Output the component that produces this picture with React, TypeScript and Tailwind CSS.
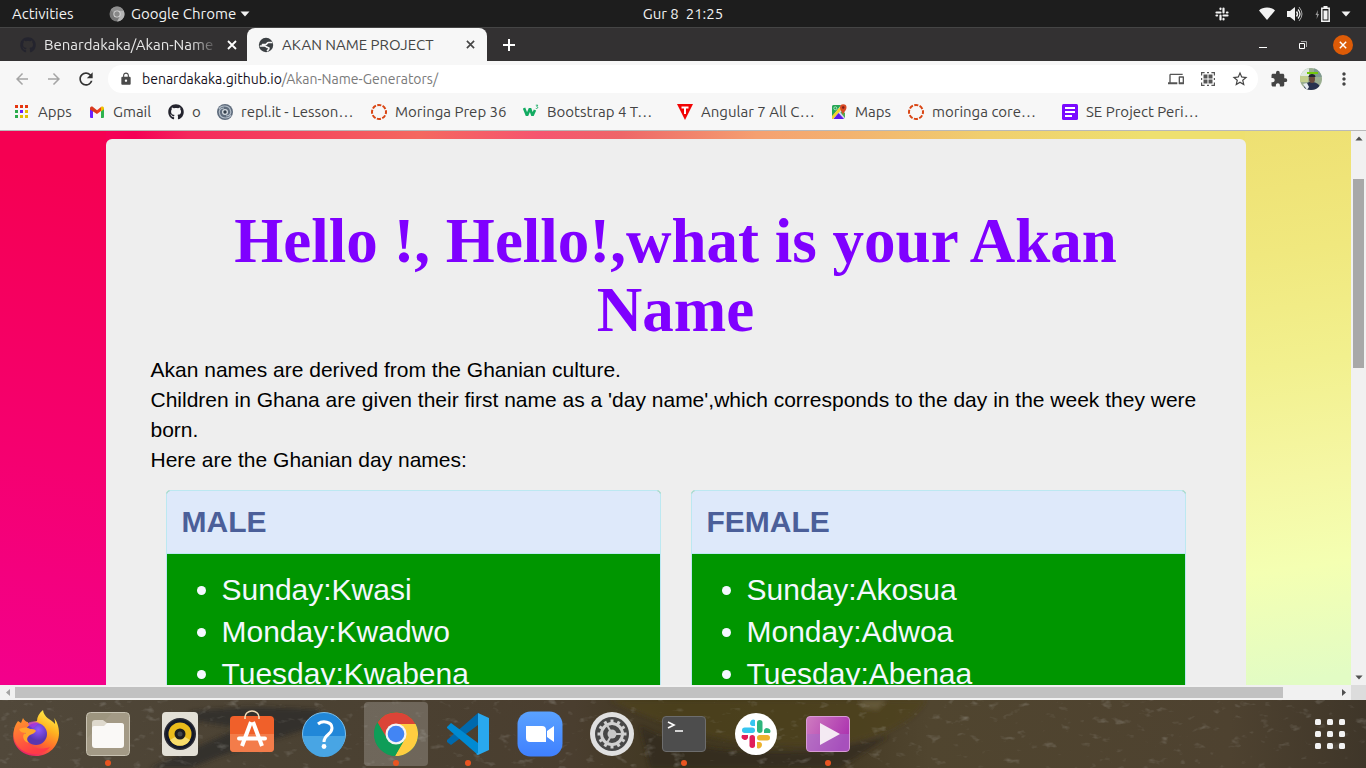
import type { ReactNode } from "react";
import { FaGithub } from "react-icons/fa";
import {
  MdArrowBack,
  MdArrowForward,
  MdDevices,
  MdExtension,
  MdLock,
  MdMoreVert,
  MdRefresh,
  MdStarBorder,
} from "react-icons/md";

const MALE = ["Sunday:Kwasi", "Monday:Kwadwo", "Tuesday:Kwabena"];
const FEMALE = ["Sunday:Akosua", "Monday:Adwoa", "Tuesday:Abenaa"];

function Caret({ className }: { className: string }) {
  return (
    <svg viewBox="0 0 10 6" className={className} aria-hidden="true">
      <path d="M0.5 0.5h9L5 5.5z" fill="currentColor" />
    </svg>
  );
}

function SystemBar() {
  return (
    <header className="grid h-7 shrink-0 grid-cols-3 items-center border-b border-[#454545] bg-[#1d1d1d] text-[15px] leading-5 text-[#f2f2f2]">
      <div className="flex items-center pl-3">
        <button className="w-[97px] text-left">Activities</button>
        <button className="flex items-center gap-[6px]">
          <svg viewBox="0 0 16 16" className="size-4" aria-hidden="true">
            <circle cx="8" cy="8" r="7.5" fill="#777" />
            <path d="M8 4.4h6.6A7.5 7.5 0 0 1 8 15.5L11 10z" fill="#b5b5b5" />
            <path d="M1.6 4A7.5 7.5 0 0 1 14.6 4.4H8a3.6 3.6 0 0 0-3.3 2.3z" fill="#8f8f8f" />
            <circle cx="8" cy="8" r="3.6" fill="#ddd" />
            <circle cx="8" cy="8" r="2.7" fill="#888" />
          </svg>
          <span className="flex items-center gap-1">
            Google Chrome
            <Caret className="h-[6px] w-[10px]" />
          </span>
        </button>
      </div>
      <time className="text-center whitespace-pre">Gur 8  21:25</time>
      <div className="flex items-center justify-end pr-[15px]">
        <svg viewBox="0 0 14 14" className="mr-[30px] size-[14px]" fill="none" stroke="#f2f2f2" strokeWidth="2.200" strokeLinecap="round" aria-hidden="true">
          <path d="M1.500 5.500h4M8.500 1.500v4M8.500 8.500h4M5.500 8.500v4M5.500 1.500v.6M12.500 5.500h-.6M8.500 12.500v-.6M1.500 8.500h.6" />
        </svg>
        <svg viewBox="0 0 16 13" className="mr-3 h-[13px] w-4" aria-hidden="true">
          <path d="M0 3.4C4-.4 12-.4 16 3.4L8 13z" fill="#f2f2f2" />
        </svg>
        <svg viewBox="0 0 16 16" className="mr-3 size-4" fill="none" stroke="#f2f2f2" aria-hidden="true">
          <path d="M0 5h3l5-4v14l-5-4H0z" fill="#f2f2f2" stroke="none" />
          <path d="M9.5 5.5q2 2.500 0 5" strokeWidth="1.400" />
          <path d="M11 3.500q4 4.500 0 9" strokeWidth="1.200" />
          <path d="M12 1q6 7 0 14" stroke="#aaa" />
        </svg>
        <svg viewBox="0 0 16 16" className="mr-[10px] size-4" fill="none" aria-hidden="true">
          <path d="M3 4 .5 9H2l-.4 4L4 8H2.600z" fill="#999" />
          <path d="M6.800 2.300h7.400v12.900H6.800z" stroke="#f2f2f2" strokeWidth="1.500" />
          <path d="M8.500 0h4v2h-4zM8.500 4.500h4v9h-4z" fill="#f2f2f2" />
        </svg>
        <Caret className="h-[6px] w-[10px]" />
      </div>
    </header>
  );
}

function Cross({ className }: { className: string }) {
  return (
    <svg viewBox="0 0 10 10" className={className} fill="none" stroke="currentColor" strokeWidth="1.8" aria-hidden="true">
      <path d="m1 1 8 8M9 1 1 9" />
    </svg>
  );
}

function GlobeIcon() {
  return (
    <svg viewBox="0 0 16 16" className="mr-2 -ml-px size-4 shrink-0" aria-hidden="true">
      <circle cx="8" cy="8" r="7.2" fill="#3c4043" />
      <path
        d="M13.500 5.500h-3c-1.500 0-1.500 2-3 2H4.500M2.500 9h4c2 0 2 1.500 3.500 1.500s1 2-.5 3"
        fill="none"
        stroke="#f7f7f7"
        strokeWidth="1.700"
        strokeLinecap="round"
      />
    </svg>
  );
}

function TabStrip() {
  return (
    <div className="flex h-[33px] shrink-0 items-center bg-[#333132] text-[15px] leading-5 text-white">
      <div className="flex h-full w-[247px] items-center rounded-br-lg pr-[10px] pl-5">
        <FaGithub className="mr-2 size-4 shrink-0 text-[#24242e]" />
        <span className="min-w-0 flex-1 overflow-hidden whitespace-nowrap text-[#e8e8e8] [mask-image:linear-gradient(to_right,#000_84%,transparent)]">
          Benardakaka/Akan-Name
        </span>
        <button aria-label="Close tab" className="ml-2">
          <Cross className="size-[10px]" />
        </button>
      </div>
      <div className="flex h-full w-60 items-center rounded-t-lg bg-[#f7f7f7] px-3 text-[#454545]">
        <GlobeIcon />
        <span className="flex-1 whitespace-nowrap">AKAN NAME PROJECT</span>
        <button aria-label="Close tab">
          <Cross className="size-[9px]" />
        </button>
      </div>
      <button aria-label="New tab" className="ml-4">
        <svg viewBox="0 0 12 12" className="size-3" stroke="white" strokeWidth="2" aria-hidden="true">
          <path d="M6 0v12M0 6h12" />
        </svg>
      </button>
      <div className="ml-auto flex items-center pr-[13px]">
        <button aria-label="Minimize" className="mr-8">
          <svg viewBox="0 0 8 8" className="size-2" aria-hidden="true">
            <path d="M0 6h8v1H0z" fill="white" />
          </svg>
        </button>
        <button aria-label="Restore" className="mr-[26px]">
          <svg viewBox="0 0 8 8" className="size-2" fill="none" aria-hidden="true">
            <path d="M.5 2.500h5v5h-5z" stroke="white" />
            <path d="M2 .5h5.500V6" stroke="#aaa" />
          </svg>
        </button>
        <button aria-label="Close window" className="grid size-5 place-items-center rounded-full bg-[#dd5b07]">
          <Cross className="size-2" />
        </button>
      </div>
    </div>
  );
}

function Avatar() {
  return (
    <svg viewBox="0 0 22 22" className="size-[22px] rounded-full" aria-hidden="true">
      <path d="M0 0h22v22H0z" fill="#9aae90" />
      <path d="M0 0h9v8H0z" fill="#dfe9e2" />
      <path d="M14 0h8v9h-8z" fill="#7f9a92" />
      <path d="M0 8h8v6H0z" fill="#c3cf8f" />
      <path d="M7 4h11v2H7z" fill="#72c80a" />
      <path d="M4 22c0-6 3-8 7-8s9 1 10 8z" fill="#28324e" />
      <ellipse cx="12" cy="11" rx="3" ry="4" fill="#6b4b3c" />
      <path d="M8.500 9c0-4 7-4 7 0z" fill="#1f2330" />
      <path d="M3 16l4-1 2 4-2 3z" fill="#e5ebf2" />
    </svg>
  );
}

function Toolbar() {
  return (
    <div className="flex h-9 shrink-0 items-center bg-[#f7f7f7] pr-3 pl-[13px]">
      <button aria-label="Back" className="mr-[14px]">
        <MdArrowBack className="size-[18px] text-[#a5a5a5]" />
      </button>
      <button aria-label="Forward" className="mr-[13px]">
        <MdArrowForward className="size-[18px] text-[#a5a5a5]" />
      </button>
      <button aria-label="Reload" className="mr-3">
        <MdRefresh className="size-5 text-[#333]" />
      </button>
      <div className="flex h-7 flex-1 items-center rounded-full bg-white pr-[9px] pl-[11px]">
        <MdLock className="mr-[9px] size-[14px] text-[#4a4a4a]" />
        <a href="#address" className="flex-1 text-sm text-[#7a7a7a]">
          <span className="text-[#15101c]">benardakaka.github.io</span>/Akan-Name-Generators/
        </a>
        <MdDevices className="mr-4 size-4 text-[#555]" />
        <svg viewBox="0 0 16 16" className="mr-[15px] size-4" fill="none" stroke="#555" aria-hidden="true">
          <path d="M1.600 4.500V1.600h3M11.400 1.600h3v3M14.400 11.400v3h-3M4.600 14.400h-3v-3M7 1.600h2M7 14.400h2M1.600 7v2M14.400 7v2" strokeWidth="1.200" />
          <path d="M3.500 3.500h4v4h-4zM8.500 3.500h4v4h-4zM3.500 8.500h4v4h-4zM8.500 8.500h4v4h-4z" fill="#555" stroke="none" />
        </svg>
        <MdStarBorder className="size-[18px] text-[#444]" />
      </div>
      <MdExtension className="ml-3 size-[18px] text-[#444]" />
      <button aria-label="Profile" className="ml-3">
        <Avatar />
      </button>
      <button aria-label="Menu" className="ml-3">
        <MdMoreVert className="size-5 text-[#444]" />
      </button>
    </div>
  );
}

function AppsIcon() {
  const colors = ["#e53610", "#e53610", "#e53610", "#2bab4b", "#6a1cff", "#e3c000", "#2bab4b", "#e3c000", "#e3c000"];
  return (
    <svg viewBox="0 0 16 16" className="size-4" aria-hidden="true">
      {colors.map((c, i) => (
        <rect key={i} x={1 + (i % 3) * 5} y={1 + Math.floor(i / 3) * 5} width="3" height="3" fill={c} />
      ))}
    </svg>
  );
}

function GmailIcon() {
  return (
    <svg viewBox="0 0 16 16" className="size-4" aria-hidden="true">
      <path d="M1 4.500 4 6v8H2a1 1 0 0 1-1-1z" fill="#6a22ff" />
      <path d="M12 6l3-1.500V13a1 1 0 0 1-1 1h-2z" fill="#2fb34f" />
      <path d="M1 4.500C1 2.600 3 2.200 4 3l4 3.200V10L1 5.500z" fill="#d93a1e" />
      <path d="M8 6.200 12 3v4l-4 3z" fill="#f03c1b" />
      <path d="M12 3c1-.8 3-.4 3 1.500V5.300L12 7.500z" fill="#f0c000" />
    </svg>
  );
}

function SpiralIcon() {
  return (
    <svg viewBox="0 0 16 16" className="size-4" fill="none" aria-hidden="true">
      <circle cx="8" cy="8" r="8" fill="#5f6c7d" />
      <path d="M2 5c2-4 9-4 11 0s0 7-4 7M14 11c-2 4-9 4-11 0S3 4 7 4" stroke="#b4bfca" strokeWidth="1.200" />
      <circle cx="8" cy="8" r="3" fill="#d6dce2" />
      <circle cx="8" cy="8" r="1.700" fill="#333e4b" />
    </svg>
  );
}

function RingIcon() {
  return (
    <svg viewBox="0 0 16 16" className="size-4" aria-hidden="true">
      <circle cx="8" cy="8" r="7" fill="none" stroke="#d94513" strokeWidth="2" strokeDasharray="4.100 1.400" strokeDashoffset="2" />
    </svg>
  );
}

function SchoolsIcon() {
  return (
    <svg viewBox="0 0 16 16" className="size-4" fill="none" stroke="#13ab62" aria-hidden="true">
      <path d="m1 4 3 7.500L7 4.500l2.500 7L12 6" strokeWidth="2.600" strokeLinejoin="bevel" />
      <path d="M12.800 1.200h2l-1 1.500c1.600.2 1.200 2.200-1 1.700" strokeWidth=".9" />
    </svg>
  );
}

function TriangleIcon() {
  return (
    <svg viewBox="0 0 16 16" className="size-4" aria-hidden="true">
      <path d="M0 0h16L8 16z" fill="#f20505" />
      <path d="M4.500 2.500h7v2H9V10H7V4.500H4.500z" fill="#fff" />
    </svg>
  );
}

function MapsIcon() {
  return (
    <svg viewBox="0 0 16 16" className="size-4" aria-hidden="true">
      <rect x="1" y="1" width="13" height="14" rx="1.500" fill="#d8d0f2" />
      <path d="M2.500 1H10L1 13V2.500A1.500 1.500 0 0 1 2.500 1z" fill="#26a755" />
      <path d="m1 12 8-9 2 2-9 10H1z" fill="#f0d52c" />
      <path d="m7.500 9 5.500 6H2.500z" fill="#5c1bea" />
      <path d="M14 9v5L9.500 8.500 11 7z" fill="#4caf50" />
      <circle cx="4.300" cy="4.300" r="1.500" fill="none" stroke="#a8e2bd" />
      <path d="M12 11C11.500 8 9 6.500 9 3.500a3 3 0 0 1 6.500 0C15.500 6.500 12.500 8 12 11z" fill="#d84a25" />
      <circle cx="12.200" cy="3.500" r="1.200" fill="#7a1e16" />
    </svg>
  );
}

function FormsIcon() {
  return (
    <svg viewBox="0 0 16 16" className="size-4" aria-hidden="true">
      <rect width="16" height="16" rx="1.500" fill="#7a0bff" />
      <path d="M3 3h10v2H3zM3 7h10v2H3zM3 11h7v2H3z" fill="#fff" />
    </svg>
  );
}

const BOOKMARKS: { label: string; icon: ReactNode; width: string }[] = [
  { label: "Apps", icon: <AppsIcon />, width: "w-[75px]" },
  { label: "Gmail", icon: <GmailIcon />, width: "w-[79px]" },
  { label: "o", icon: <FaGithub className="size-4 text-[#24242e]" />, width: "w-[49px]" },
  { label: "repl.it - Lesson…", icon: <SpiralIcon />, width: "w-[154px]" },
  { label: "Moringa Prep 36", icon: <RingIcon />, width: "w-[152px]" },
  { label: "Bootstrap 4 T…", icon: <SchoolsIcon />, width: "w-[154px]" },
  { label: "Angular 7 All C…", icon: <TriangleIcon />, width: "w-[154px]" },
  { label: "Maps", icon: <MapsIcon />, width: "w-[77px]" },
  { label: "moringa core…", icon: <RingIcon />, width: "w-[154px]" },
  { label: "SE Project Peri…", icon: <FormsIcon />, width: "w-[154px]" },
];

function BookmarksBar() {
  return (
    <nav
      aria-label="Bookmarks"
      className="flex h-[34px] shrink-0 items-center border-b border-[#b9b9b9] bg-[#f7f7f7] pb-1 pl-[14px] text-[15px] leading-5 text-[#444]"
    >
      {BOOKMARKS.map((b) => (
        <a key={b.label} href="#bookmark" className={`flex shrink-0 items-center gap-2 whitespace-nowrap ${b.width}`}>
          {b.icon}
          {b.label}
        </a>
      ))}
    </nav>
  );
}

function NamePanel({ title, names }: { title: string; names: string[] }) {
  return (
    <section className="flex-1 rounded border border-[#bce8f1] bg-[#009600]">
      <h2 className="rounded-t-[3px] border-b border-[#bce8f1] bg-[#dee9fa] px-[15px] py-[10px] text-3xl leading-[42px] font-bold text-[#4b5f99]">
        {title}
      </h2>
      <ul className="list-disc py-[15px] pr-[15px] pl-[55px] text-3xl leading-[42px] text-[#f4f8ff]">
        {names.map((n) => (
          <li key={n}>{n}</li>
        ))}
      </ul>
    </section>
  );
}

function Page() {
  return (
    <main className="min-w-0 flex-1 overflow-hidden bg-[linear-gradient(188deg,#f50052_8%,#f50070_60%,#f3008c),linear-gradient(172deg,#eee072,#f0e87e_22%,#f2f08e_42%,#f5f7a4_62%,#f4ffb2_78%,#e2fcc4_98%),linear-gradient(to_right,#f50056_10%,#f4285c_14%,#f4685f_31%,#f6546f_40%,#ee6668_46%,#f5a070_56%,#f0cf6e_73%,#eee06f_85%)] bg-[size:106px_100%,106px_100%,100%_100%] bg-[position:left,right,left] bg-no-repeat pt-2 font-['Liberation_Sans',Arial,sans-serif]">
      <article className="mx-auto max-w-[1140px] rounded-md bg-[#eee] px-[45px] pt-[68px] pb-12">
        <h1 className="text-center font-['Liberation_Serif','Times_New_Roman',serif] text-[63px] leading-[69px] font-bold text-[#7f00ff]">
          Hello !, Hello!,what is your Akan Name
        </h1>
        <p className="mt-[10px] text-[21px] leading-[30px] text-black">
          Akan names are derived from the Ghanian culture.
          <br />
          Children in Ghana are given their first name as a 'day name',which corresponds to the day in the week they were born.
          <br />
          Here are the Ghanian day names:
        </p>
        <div className="flex gap-[30px] p-[15px]">
          <NamePanel title="MALE" names={MALE} />
          <NamePanel title="FEMALE" names={FEMALE} />
        </div>
      </article>
    </main>
  );
}

function VerticalScrollbar() {
  return (
    <div className="flex w-[15px] shrink-0 flex-col items-center bg-[#f1f1f1] text-[#505050]" aria-hidden="true">
      <div className="grid h-[15px] place-items-center">
        <Caret className="h-[5px] w-2 rotate-180" />
      </div>
      <div className="flex w-full flex-1 flex-col items-center pt-[33px]">
        <div className="h-[189px] w-[11px] bg-[#a8a8a8]" />
      </div>
      <div className="grid h-[15px] place-items-center">
        <Caret className="h-[5px] w-2" />
      </div>
    </div>
  );
}

function HorizontalScrollbar() {
  return (
    <div className="flex h-[15px] shrink-0 items-center bg-[#f1f1f1] text-[#505050]" aria-hidden="true">
      <div className="grid w-[15px] place-items-center">
        <Caret className="h-[5px] w-2 rotate-90 text-[#a3a3a3]" />
      </div>
      <div className="flex-1">
        <div className="h-[11px] w-[96%] bg-[#c1c1c1]" />
      </div>
      <div className="grid w-[15px] place-items-center">
        <Caret className="h-[5px] w-2 -rotate-90" />
      </div>
      <div className="h-full w-[15px] bg-[#dcdcdc]" />
    </div>
  );
}

function Firefox() {
  return (
    <svg viewBox="0 0 48 48" className="size-12" aria-hidden="true">
      <defs>
        <linearGradient id="ffBody" x1="0.8" y1="0" x2="0.3" y2="1">
          <stop offset="0" stopColor="#fff44f" />
          <stop offset=".35" stopColor="#ffb320" />
          <stop offset=".65" stopColor="#ff6a2d" />
          <stop offset="1" stopColor="#e81e6b" />
        </linearGradient>
        <linearGradient id="ffFox" x1="0" y1="0" x2="0.4" y2="1">
          <stop offset="0" stopColor="#ff9b2a" />
          <stop offset="1" stopColor="#ff3b46" />
        </linearGradient>
        <radialGradient id="ffGlobe" cx=".6" cy=".3">
          <stop offset="0" stopColor="#9059ff" />
          <stop offset="1" stopColor="#5a36b0" />
        </radialGradient>
      </defs>
      <path d="M31 0c-4 3-6 7-6 11L12 14 4 16C0 23 1 30 3 34c4 8 12 12 21 12 13 0 23-10 23-23 0-6-2-12-5-15 1 2 1 4 1 6C39 9 32 8 31 0z" fill="url(#ffBody)" />
      <path d="M6 11C2 16 1 22 2 28c2 10 11 16 21 16 7 0 12-3 15-7-8 3-20 2-24-7l2-18c-2 0-4-2-5-4l-2 5z" fill="url(#ffFox)" />
      <circle cx="24" cy="24" r="11" fill="url(#ffGlobe)" />
      <path d="M7 19c4-2 8-2 11 0 2 0 5 0 6 2-1 2-4 3-6 4-3 2-4 5-1 8-6-1-8-9-3-10-3 0-6-1-7-4z" fill="#ffa62b" />
      <path d="M16 13c3-2 8-2 11 0l-6 5c-3-1-5-3-5-5z" fill="#b833e1" opacity=".7" />
    </svg>
  );
}

function Files() {
  return (
    <svg viewBox="0 0 48 48" className="size-12" aria-hidden="true">
      <rect x="2.500" y="2.500" width="43" height="43" rx="4" fill="#9d957f" stroke="#c8c2b2" />
      <path d="M3 28 28 3h13a4 4 0 0 1 4 4v34a4 4 0 0 1-4 4H7a4 4 0 0 1-4-4z" fill="#a69f8b" opacity=".6" />
      <path d="M8 13a3 3 0 0 1 3-3h8l4 3h14a3 3 0 0 1 3 3v5H8z" fill="#ded9cd" />
      <path d="M8 18a2 2 0 0 1 2-2h10l3-3h14a3 3 0 0 1 3 3v19a3 3 0 0 1-3 3H11a3 3 0 0 1-3-3z" fill="#faf9f7" />
    </svg>
  );
}

function Speaker() {
  return (
    <svg viewBox="0 0 48 48" className="size-12" aria-hidden="true">
      <rect x="6" y="2" width="36" height="44" rx="4" fill="#e3e0d6" />
      <circle cx="24" cy="24" r="16" fill="#2c2c33" />
      <circle cx="24" cy="24" r="14.500" fill="#14192a" />
      <circle cx="24" cy="24" r="11.500" fill="#eabb1b" />
      <path d="M24 24 14 30a11.500 11.500 0 0 0 20 0z" fill="#f7dc6b" />
      <circle cx="24" cy="24" r="5.500" fill="#1c1c20" />
      <circle cx="24" cy="24" r="2.500" fill="#44474a" />
    </svg>
  );
}

function Software() {
  return (
    <svg viewBox="0 0 48 48" className="size-12" fill="none" aria-hidden="true">
      <rect x="2" y="6" width="44" height="36" rx="4" fill="#f0602a" />
      <path d="M2 24h44v14a4 4 0 0 1-4 4H6a4 4 0 0 1-4-4z" fill="#f37c4a" />
      <path d="M17 9V7a7 6 0 0 1 14 0v2" stroke="#f3dcb7" strokeWidth="1.600" />
      <path d="m23 12-9 24M25 12l9 24" stroke="#fff" strokeWidth="4" />
      <path d="M11 28.500h26" stroke="#fff" strokeWidth="4" strokeLinecap="round" />
    </svg>
  );
}

function Help() {
  return (
    <svg viewBox="0 0 48 48" className="size-12" fill="none" aria-hidden="true">
      <circle cx="24" cy="24" r="21.500" fill="#2187d8" stroke="#7bc0ee" />
      <path d="M3 26h42a21 21 0 0 1-42 0z" fill="#48a5e4" />
      <path d="M18 14c5-4 14-2 14 4 0 7-8 6-8 14" stroke="#fff" strokeWidth="3" />
      <circle cx="24" cy="36.500" r="2.400" fill="#fff" />
    </svg>
  );
}

function Chrome() {
  return (
    <svg viewBox="0 0 48 48" className="size-12" aria-hidden="true">
      <circle cx="24" cy="24" r="22" fill="#0f9d58" />
      <path d="M24 14h19.600A22 22 0 0 1 23 46l10-17z" fill="#ffcd40" />
      <path d="M5.500 12.500A22 22 0 0 1 43.600 14H24a10 10 0 0 0-9 6l-1 9z" fill="#db4437" />
      <path d="M5.500 12.500A22 22 0 0 0 23 46l7-13-14-3z" fill="#0f9d58" />
      <circle cx="24" cy="24" r="10.500" fill="#f5f5f5" />
      <circle cx="24" cy="24" r="8.300" fill="#4285f4" />
    </svg>
  );
}

function Code() {
  return (
    <svg viewBox="0 0 48 48" className="size-12" aria-hidden="true">
      <path d="M34 3v12L7 35l-4-3v-2z" fill="#0069ad" />
      <path d="m3 17 4-4 27 20v12L3 18z" fill="#008ad2" />
      <path d="m34 3 11 5v32l-11 5-2-1 2-1z" fill="#29a8ee" />
    </svg>
  );
}

function Zoom() {
  return (
    <svg viewBox="0 0 48 48" className="size-12" aria-hidden="true">
      <defs>
        <linearGradient id="zoomBlue" x2="0" y2="1">
          <stop stopColor="#5aa2ff" />
          <stop offset="1" stopColor="#3f80ff" />
        </linearGradient>
      </defs>
      <rect x="1.500" y="1.500" width="45" height="45" rx="13" fill="url(#zoomBlue)" />
      <path d="M10 16h16a4 4 0 0 1 4 4v12H14a4 4 0 0 1-4-4zM31 21l7-5v16l-7-5z" fill="#fff" />
    </svg>
  );
}

function Settings() {
  const teeth = Array.from({ length: 12 }, (_, i) => i * 30);
  return (
    <svg viewBox="0 0 48 48" className="size-12" fill="none" aria-hidden="true">
      <circle cx="24" cy="24" r="22" fill="#e0e0e0" />
      <circle cx="24" cy="24" r="17" fill="#474747" />
      <circle cx="24" cy="24" r="10.500" stroke="#d0d0d0" strokeWidth="3" />
      {teeth.map((a) => (
        <path key={a} d="M22.500 9.500h3v4h-3z" fill="#d0d0d0" transform={`rotate(${a} 24 24)`} />
      ))}
      <path d="M24 24h10M24 24l-5-9M24 24l-5 9" stroke="#c8c8c8" strokeWidth="2" />
      <circle cx="24" cy="24" r="4.500" fill="#c8c8c8" />
    </svg>
  );
}

function Terminal() {
  return (
    <svg viewBox="0 0 48 48" className="size-12" fill="none" aria-hidden="true">
      <rect x="2.500" y="6.500" width="43" height="35" rx="3.500" fill="#4d4d4d" stroke="#6d6d6d" />
      <path d="m8 12 6 3-6 3M15 21h8" stroke="#fff" strokeWidth="1.600" />
    </svg>
  );
}

function Slack() {
  return (
    <svg viewBox="0 0 48 48" className="size-12" aria-hidden="true">
      <circle cx="24" cy="24" r="21" fill="#fff" />
      <g fill="#36c5f0">
        <rect x="10" y="17.500" width="13" height="5.500" rx="2.750" />
        <path d="M23 10v6h-3a3 3 0 1 1 3-6z" />
      </g>
      <g fill="#2eb67d">
        <rect x="25" y="10" width="5.500" height="13" rx="2.750" />
        <path d="M38 23h-6v-3a3 3 0 1 1 6 3z" />
      </g>
      <g fill="#ecb22e">
        <rect x="25" y="25" width="13" height="5.500" rx="2.750" />
        <path d="M25 38v-6h3a3 3 0 1 1-3 6z" />
      </g>
      <g fill="#e01e5a">
        <rect x="17.500" y="25" width="5.500" height="13" rx="2.750" />
        <path d="M10 25h6v3a3 3 0 1 1-6-3z" />
      </g>
    </svg>
  );
}

function Player() {
  return (
    <svg viewBox="0 0 48 48" className="size-12" aria-hidden="true">
      <defs>
        <linearGradient id="playerPink" x2="1" y2="0.4">
          <stop stopColor="#cf7cc0" />
          <stop offset="1" stopColor="#ad36b0" />
        </linearGradient>
      </defs>
      <rect x="2.500" y="6.500" width="43" height="35" rx="3.500" fill="url(#playerPink)" stroke="#d89bd6" />
      <path d="M3 24h42v14a3 3 0 0 1-3 3H6a3 3 0 0 1-3-3z" fill="#a070cc" opacity=".45" />
      <path d="m16 13 20 11-20 11z" fill="#f4eaf3" />
    </svg>
  );
}

const DOCK: { name: string; icon: ReactNode; running?: boolean; active?: boolean }[] = [
  { name: "Firefox", icon: <Firefox /> },
  { name: "Files", icon: <Files />, running: true },
  { name: "Rhythmbox", icon: <Speaker /> },
  { name: "Software", icon: <Software /> },
  { name: "Help", icon: <Help /> },
  { name: "Chrome", icon: <Chrome />, running: true, active: true },
  { name: "Code", icon: <Code />, running: true },
  { name: "Zoom", icon: <Zoom /> },
  { name: "Settings", icon: <Settings /> },
  { name: "Terminal", icon: <Terminal />, running: true },
  { name: "Slack", icon: <Slack /> },
  { name: "Player", icon: <Player />, running: true },
];

function Wallpaper() {
  return (
    <svg viewBox="0 0 1366 68" preserveAspectRatio="none" className="absolute inset-0 size-full" aria-hidden="true">
      <defs>
        <linearGradient id="ground">
          <stop offset="0" stopColor="#51483a" />
          <stop offset=".2" stopColor="#4b4233" />
          <stop offset=".42" stopColor="#4a3e2f" />
          <stop offset=".5" stopColor="#40371f" />
          <stop offset=".62" stopColor="#473c26" />
          <stop offset=".68" stopColor="#50452f" />
          <stop offset=".9" stopColor="#4e4230" />
          <stop offset="1" stopColor="#3f3629" />
        </linearGradient>
        <filter id="soft">
          <feGaussianBlur stdDeviation="2" />
        </filter>
        <filter id="flecks" x="0" y="0" width="100%" height="100%">
          <feTurbulence type="fractalNoise" baseFrequency="0.07 0.12" numOctaves="3" seed="7" />
          <feColorMatrix values="0 0 0 0 .42  0 0 0 0 .41  0 0 0 0 .38  3 0 0 0 -1.900" />
        </filter>
      </defs>
      <rect width="1366" height="68" fill="url(#ground)" />
      <g filter="url(#soft)">
        <path d="M190 12q60-8 130-2l-10 18-90 28-30 12h-40l90-40-50-8z" fill="#2b2a26" opacity=".7" />
        <path d="M610 0h316q-20 34-90 44-110 12-226-44z" fill="#4f421a" opacity=".7" />
        <path d="M640 26q60 34 190 24l60-14-50 32H650z" fill="#2e271a" opacity=".6" />
        <path d="M860 0h26l-8 10-16-2z" fill="#6d6443" opacity=".7" />
      </g>
      <rect width="1366" height="68" filter="url(#flecks)" opacity=".4" />
    </svg>
  );
}

function Dock() {
  return (
    <footer className="relative flex h-[68px] shrink-0 items-center overflow-hidden bg-[#4b4233]">
      <Wallpaper />
      <nav aria-label="Dock" className="relative flex flex-1">
        {DOCK.map((d) => (
          <div key={d.name} className="flex w-[72px] justify-center">
            <button
              aria-label={d.name}
              className={`relative grid size-16 place-items-center rounded ${d.active ? "bg-white/20" : ""}`}
            >
              {d.icon}
              {d.running && <span className="absolute bottom-0 left-[29px] size-[6px] rounded-full bg-[#e95420]" />}
            </button>
          </div>
        ))}
      </nav>
      <button aria-label="Show applications" className="relative mr-[21px]">
        <svg viewBox="0 0 30 30" className="size-[30px]" fill="#f2f2f2" aria-hidden="true">
          {[0, 12, 24].map((y) => [0, 12, 24].map((x) => <rect key={`${x}-${y}`} x={x} y={y} width="6" height="6" rx="1.500" />))}
        </svg>
      </button>
    </footer>
  );
}

export default function App() {
  return (
    <div className="flex h-screen flex-col overflow-hidden font-['Ubuntu','Noto_Sans',sans-serif]">
      <SystemBar />
      <TabStrip />
      <Toolbar />
      <BookmarksBar />
      <div className="flex min-h-0 flex-1">
        <Page />
        <VerticalScrollbar />
      </div>
      <HorizontalScrollbar />
      <Dock />
    </div>
  );
}
